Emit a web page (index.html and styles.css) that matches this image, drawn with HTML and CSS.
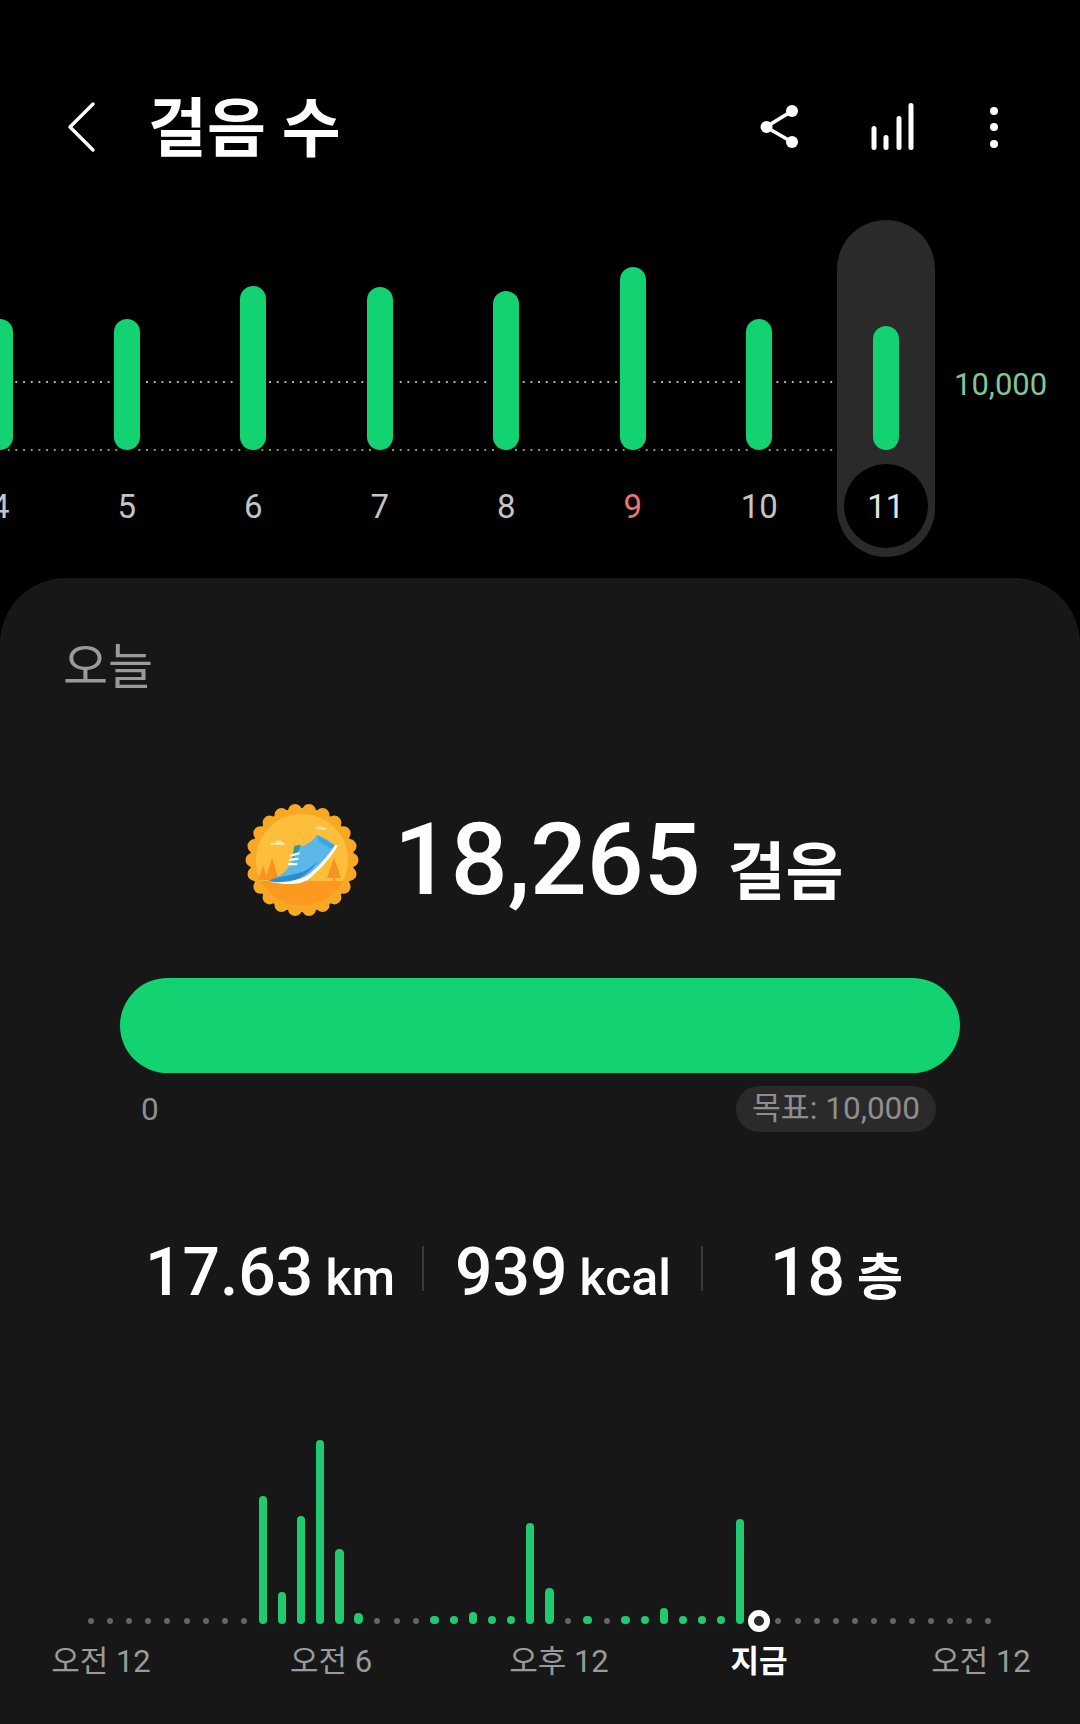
FILE: index.html
```html
<!DOCTYPE html>
<html lang="ko">
<head>
    <meta charset="UTF-8">
    <meta name="viewport" content="width=device-width, initial-scale=1.0">
    <title>걸음 수</title>
    <link rel="stylesheet" href="styles.css">
</head>
<body>

    <!-- Header -->
    <header class="top-bar">
        <svg class="icon-back" width="36" height="70" viewBox="0 0 36 70">
            <path d="M29 12 L6 35 L29 58" fill="none" stroke="#fff" stroke-width="3.4" stroke-linecap="round" stroke-linejoin="round"/>
        </svg>
        <h1 class="title">걸음 수</h1>
        <div class="actions">
            <svg width="40" height="70" viewBox="0 0 40 70">
                <path d="M32 19 L6 35 L32 50" fill="none" stroke="#fff" stroke-width="3.6"/>
                <circle cx="32" cy="19" r="6" fill="#fff"/>
                <circle cx="6.500" cy="35" r="6" fill="#fff"/>
                <circle cx="32" cy="50" r="6" fill="#fff"/>
            </svg>
            <svg width="50" height="70" viewBox="0 0 50 70">
                <g fill="#fff">
                    <rect x="3.500" y="34" width="5" height="24" rx="2.500"/>
                    <rect x="15.500" y="43" width="5" height="15" rx="2.500"/>
                    <rect x="28.500" y="24" width="5" height="34" rx="2.500"/>
                    <rect x="40.500" y="11" width="5" height="47" rx="2.500"/>
                </g>
            </svg>
            <svg width="18" height="70" viewBox="0 0 18 70">
                <circle cx="8" cy="19" r="4" fill="#fff"/>
                <circle cx="8" cy="35" r="4" fill="#fff"/>
                <circle cx="8" cy="52" r="4" fill="#fff"/>
            </svg>
        </div>
    </header>

    <!-- Week chart -->
    <section class="week">
        <div class="grid-line grid-goal"></div>
        <div class="grid-line grid-base"></div>

        <div class="week-col">
            <div class="bar-area"><div class="bar" style="height:131px"></div></div>
            <div class="day">4</div>
        </div>
        <div class="week-col">
            <div class="bar-area"><div class="bar" style="height:131px"></div></div>
            <div class="day">5</div>
        </div>
        <div class="week-col">
            <div class="bar-area"><div class="bar" style="height:164px"></div></div>
            <div class="day">6</div>
        </div>
        <div class="week-col">
            <div class="bar-area"><div class="bar" style="height:163px"></div></div>
            <div class="day">7</div>
        </div>
        <div class="week-col">
            <div class="bar-area"><div class="bar" style="height:159px"></div></div>
            <div class="day">8</div>
        </div>
        <div class="week-col">
            <div class="bar-area"><div class="bar" style="height:183px"></div></div>
            <div class="day sunday">9</div>
        </div>
        <div class="week-col">
            <div class="bar-area"><div class="bar" style="height:131px"></div></div>
            <div class="day">10</div>
        </div>
        <div class="week-col selected">
            <div class="bar-area"><div class="bar" style="height:124px"></div></div>
            <div class="day">11</div>
        </div>

        <div class="goal-label">10,000</div>
    </section>

    <!-- Today card -->
    <main class="card">
        <div class="today">오늘</div>

        <div class="summary">
            <svg class="badge" width="125" height="125" viewBox="0 0 125 125">
                <defs>
                    <clipPath id="inner"><circle cx="62" cy="62" r="46"/></clipPath>
                </defs>
                <circle cx="62" cy="62" r="52" fill="#f9a825"/>
                <circle cx="62" cy="62" r="49.500" fill="none" stroke="#f9a825" stroke-width="14" stroke-linecap="round" pathLength="22" stroke-dasharray="0 1"/>
                <circle cx="62" cy="62" r="46" fill="#fdbf3b"/>
                <g clip-path="url(#inner)">
                    <rect x="10" y="83" width="105" height="40" fill="#fc9a1f"/>
                </g>
                <path d="M32 60 L39 82 L25 82Z M23 68 L28 82 L18 82Z M94 60 L101 80 L87 80Z" fill="#f7931e"/>
                <rect x="93" y="78" width="2" height="5" fill="#f7931e"/>
                <path d="M30 47 C31 44 34 44 35 45 C37 41 42 42 43 45 C45 45 45 47 44 47Z M75 31 C77 28 80 28 81 29 C83 28 86 30 87 32Z" fill="#fee2a0"/>
                <g transform="translate(-5 -4) scale(1.08)">
                    <path d="M32 80 C42 76 49 72 52 62 L55 49 C62 50 70 46 76 38 C82 40 88 44 93 48 C88 56 76 70 66 76 C56 81 42 82 32 80Z" fill="#5bb6ea"/>
                    <path d="M31 80 C42 76 50 76 63 72 C68 70 72 66 77 62 C70 71 63 77 55 80 C46 83 38 82 31 80Z" fill="#2a8fd0"/>
                    <path d="M55 48 L61 47 L58 55 L53 60Z" fill="#2b9c9c"/>
                    <path d="M76 38 L93 48 L89 51 L78 44Z" fill="#3ba5df"/>
                    <path d="M31 81 C44 84 60 85 68 79 C78 71 90 58 95 48 L93 47 C87 56 76 69 66 76 C56 81 42 83 31 81Z" fill="#fff"/>
                    <path d="M52 57 L59 55 M51 61 L58 60 M50 65 L57 65" stroke="#fff" stroke-width="2" stroke-linecap="round"/>
                </g>
            </svg>
            <div class="count">18,265<span class="count-unit">걸음</span></div>
        </div>

        <div class="progress"></div>

        <div class="goal-row">
            <span class="goal-zero">0</span>
            <span class="goal-pill">목표: 10,000</span>
        </div>

        <div class="stats">
            <div class="stat stat-km">17.63<span class="unit">km</span></div>
            <div class="sep"></div>
            <div class="stat stat-kcal">939<span class="unit">kcal</span></div>
            <div class="sep"></div>
            <div class="stat stat-floor">18<span class="unit unit-kr">층</span></div>
        </div>

        <!-- half hour steps, 48 per day -->
        <div class="hours">
            <i class="off"></i><i class="off"></i><i class="off"></i><i class="off"></i><i class="off"></i><i class="off"></i><i class="off"></i><i class="off"></i><i class="off"></i>
            <i class="on" style="height:128px"></i>
            <i class="on" style="height:32px"></i>
            <i class="on" style="height:108px"></i>
            <i class="on" style="height:184px"></i>
            <i class="on" style="height:75px"></i>
            <i class="on" style="height:11px"></i>
            <i class="off"></i><i class="off"></i><i class="off"></i>
            <i class="on"></i><i class="on"></i>
            <i class="on" style="height:12px"></i>
            <i class="on"></i><i class="on"></i>
            <i class="on" style="height:101px"></i>
            <i class="on" style="height:36px"></i>
            <i class="off"></i>
            <i class="on"></i>
            <i class="off"></i>
            <i class="on"></i><i class="on"></i>
            <i class="on" style="height:16px"></i>
            <i class="on"></i><i class="on"></i><i class="on"></i>
            <i class="on" style="height:105px"></i>
            <i class="now"></i>
            <i class="off"></i><i class="off"></i><i class="off"></i><i class="off"></i><i class="off"></i><i class="off"></i><i class="off"></i><i class="off"></i><i class="off"></i><i class="off"></i><i class="off"></i><i class="off"></i>
        </div>

        <div class="hour-labels">
            <span>오전 12</span>
            <span>오전 6</span>
            <span>오후 12</span>
            <span class="hour-now">지금</span>
            <span>오전 12</span>
        </div>
    </main>

</body>
</html>
```

FILE: styles.css
```css
* {
    box-sizing: border-box;
}

html, body {
    margin: 0;
    padding: 0;
}

body {
    width: 1080px;
    height: 1724px;
    overflow: hidden;
    background-color: #000;
    color: #fff;
    font-family: Roboto, "Noto Sans CJK KR", sans-serif;
}

/* Header */
.top-bar {
    display: flex;
    align-items: center;
    height: 70px;
    margin-top: 92px;
    padding-left: 64px;
}

.title {
    margin: 6px 0 0 48px;
    font-size: 64px;
    font-weight: 700;
    line-height: 70px;
}

.actions {
    display: flex;
    margin-left: auto;
    margin-right: 76px;
    gap: 68px;
}

/* Week chart */
.week {
    position: relative;
    display: flex;
    height: 337px;
    margin: 58px 0 0 -63px;
}

.grid-line {
    position: absolute;
    left: 63px;
    width: 838px;
    height: 2px;
    background-image: radial-gradient(circle at 1px 1px, #a9b8aa 1px, transparent 1.2px);
    background-size: 7.7px 2px;
}

.grid-goal { top: 161px; }
.grid-base { top: 229px; opacity: 0.8; }

.week-col {
    position: relative;
    flex: none;
    display: flex;
    flex-direction: column;
    align-items: center;
    width: 126.5px;
}

.selected::before {
    content: "";
    position: absolute;
    top: 0;
    left: 14px;
    width: 98px;
    height: 337px;
    background-color: #2a2a2a;
    border-radius: 49px;
}

.bar-area {
    position: relative;
    display: flex;
    align-items: flex-end;
    height: 230px;
}

.bar {
    width: 26px;
    background-color: #12d271;
    border-radius: 13px;
    box-shadow: 0 0 0 2px #000;
}

.selected .bar {
    box-shadow: none;
}

.day {
    position: relative;
    width: 84px;
    height: 84px;
    margin-top: 14px;
    font-size: 33px;
    line-height: 86px;
    text-align: center;
    color: #c4c4c4;
}

.sunday {
    color: #e8776e;
}

.selected .day {
    background-color: #000;
    border-radius: 50%;
    color: #e4e4e4;
}

.goal-label {
    margin: 145px 0 0 5px;
    font-size: 31px;
    line-height: 40px;
    color: #84c596;
}

/* Today card */
.card {
    height: 1146px;
    margin-top: 21px;
    padding-top: 60px;
    background-color: #171717;
    border-radius: 66px 66px 0 0;
}

.today {
    padding-left: 63px;
    font-size: 49px;
    line-height: 60px;
    color: #9a9a9a;
}

.summary {
    display: flex;
    height: 125px;
    margin-top: 100px;
    padding-left: 240px;
}

.count {
    margin: 12px 0 0 29px;
    font-size: 100px;
    font-weight: 500;
    line-height: 100px;
    white-space: nowrap;
}

.count-unit {
    margin-left: 27px;
    font-size: 63px;
    font-weight: 700;
    line-height: 56px;
}

.progress {
    width: 840px;
    height: 95px;
    margin: 55px 0 0 120px;
    background-color: #12d271;
    border-radius: 47.5px;
}

.goal-row {
    display: flex;
    justify-content: space-between;
    align-items: center;
    height: 46px;
    margin-top: 13px;
    padding: 0 144px 0 141px;
    font-size: 31.5px;
    color: #8e8e8e;
}

.goal-pill {
    height: 46px;
    padding: 0 16px;
    line-height: 46px;
    background-color: #2a2a2a;
    border-radius: 23px;
}

.stats {
    display: flex;
    height: 80px;
    margin-top: 101px;
    padding-left: 145px;
}

.stat {
    font-size: 66px;
    font-weight: 500;
    line-height: 80px;
    white-space: nowrap;
}

.stat-km { width: 277px; }
.stat-kcal { width: 277px; padding-left: 31px; }
.stat-floor { padding-left: 67px; }

.unit {
    margin-left: 12px;
    font-size: 50px;
    line-height: 48px;
}

.unit-kr {
    font-weight: 700;
}

.sep {
    width: 2px;
    height: 45px;
    margin-top: 13px;
    background-color: #3a3a3a;
}

/* Hourly chart */
.hours {
    display: grid;
    grid-template-columns: repeat(48, 19.1px);
    align-items: end;
    justify-items: center;
    height: 184px;
    margin: 127px 0 0 81.5px;
}

.off {
    width: 6px;
    height: 6px;
    background-color: #666;
    border-radius: 50%;
}

.on {
    width: 8.5px;
    height: 8.5px;
    background-color: #1fca70;
    border-radius: 4.25px;
}

.now {
    width: 22px;
    height: 22px;
    margin-bottom: -8px;
    background-color: #2a2a2a;
    border: 6px solid #fff;
    border-radius: 50%;
}

.hour-labels {
    display: grid;
    grid-template-columns: 120px 340px 116px 284px 160px;
    margin: 16px 0 0 41px;
    font-size: 31px;
    line-height: 44px;
    text-align: center;
    white-space: nowrap;
    color: #9a9a9a;
}

.hour-now {
    font-weight: 700;
    color: #fff;
}
```
